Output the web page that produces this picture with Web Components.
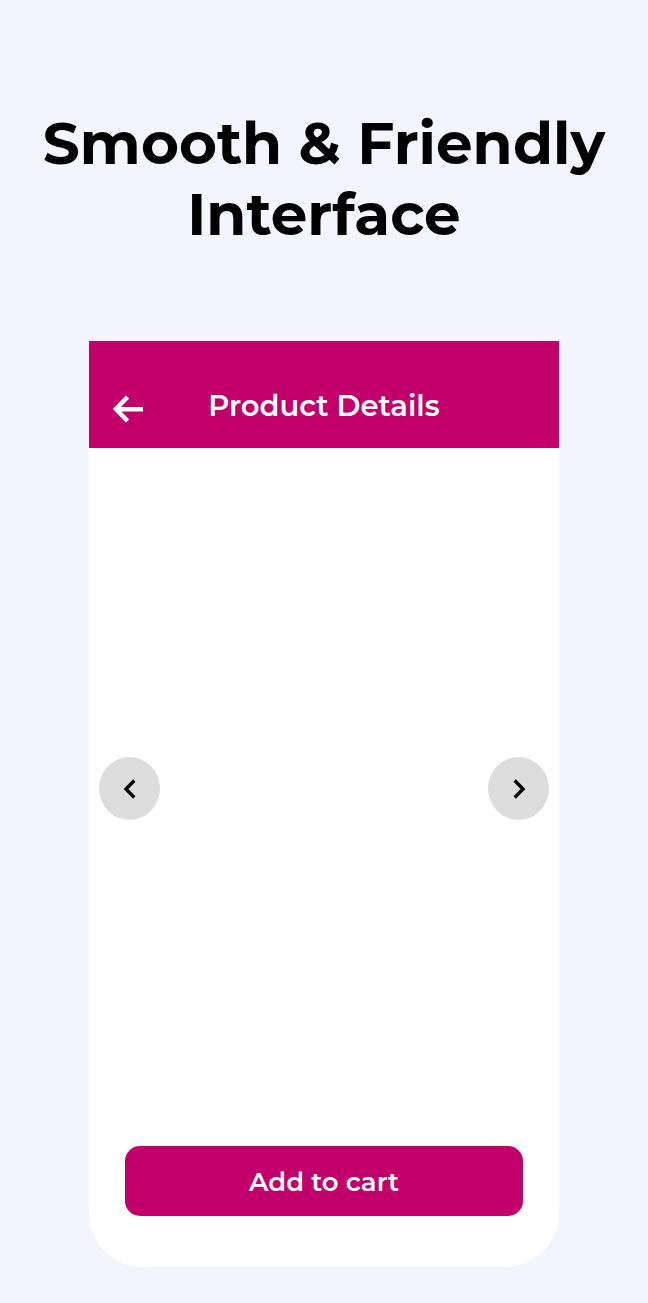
<!DOCTYPE html>
<html lang="en">
<head>
<meta charset="utf-8">
<meta name="viewport" content="width=device-width, initial-scale=1">
<title>Smooth &amp; Friendly Interface</title>
<style>
  body { margin: 0; background: #f2f5fd; font-family: Montserrat, Inter, sans-serif; --brand: #c1006b; }
</style>
</head>
<body>
<showcase-page>
  <span slot="title">Smooth &amp; Friendly<br>Interface</span>
  <product-screen>
    <app-header slot="header">Product Details</app-header>
    <image-carousel></image-carousel>
    <primary-button slot="footer">Add to cart</primary-button>
  </product-screen>
</showcase-page>

<script>
const define = (name, html) => customElements.define(name, class extends HTMLElement {
  constructor() {
    super();
    this.attachShadow({ mode: 'open' }).innerHTML = html;
  }
});

define('showcase-page', `
  <style>
    :host { display: block; padding: 108px 0 36px; }
    h1 { margin: 0 0 91px; font-size: 58px; line-height: 71px; font-weight: 700; text-align: center; color: #000; }
    main { padding: 0 89px; }
  </style>
  <h1><slot name="title"></slot></h1>
  <main><slot></slot></main>`);

define('product-screen', `
  <style>
    :host { display: flex; flex-direction: column; background: #fff; border-radius: 0 0 54px 54px; overflow: hidden; }
    footer { padding: 17px 36px 51px; }
  </style>
  <slot name="header"></slot>
  <slot></slot>
  <footer><slot name="footer"></slot></footer>`);

define('app-header', `
  <style>
    :host { display: block; background: var(--brand); color: #fff; }
    header { display: grid; grid-template-columns: 32px 1fr 32px; align-items: center; padding: 46px 23px 23px; }
    button { display: block; margin: 0; padding: 6px 0 0; border: 0; background: none; color: inherit; cursor: pointer; }
    svg { display: block; }
    h2 { margin: 0; font-size: 29px; line-height: 38px; font-weight: 600; text-align: center; }
  </style>
  <header>
    <button type="button" aria-label="Back">
      <svg width="32" height="32" viewBox="0 0 32 32" fill="none" stroke="currentColor" stroke-width="4.600" aria-hidden="true"><path d="M15.500 4 4 16l11.500 12M4 16.300h27"/></svg>
    </button>
    <h2><slot></slot></h2>
  </header>`);

define('image-carousel', `
  <style>
    :host { display: flex; align-items: center; justify-content: space-between; min-height: 681px; padding: 0 10px; }
    button { display: grid; place-items: center; width: 61px; height: 63px; padding: 0; border: 0; border-radius: 50%; background: #dddddd; color: #080808; cursor: pointer; }
  </style>
  <button type="button" aria-label="Previous image">
    <svg width="24" height="24" viewBox="0 0 24 24" fill="none" stroke="currentColor" stroke-width="3.400" aria-hidden="true"><path d="M16.300 3.500 8 12l8.300 8.500"/></svg>
  </button>
  <button type="button" aria-label="Next image">
    <svg width="24" height="24" viewBox="0 0 24 24" fill="none" stroke="currentColor" stroke-width="3.400" aria-hidden="true"><path d="m7.700 3.500 8.300 8.500-8.300 8.500"/></svg>
  </button>`);

define('primary-button', `
  <style>
    :host { display: block; }
    button { display: block; width: 100%; padding: 20px 16px 18px; border: 0; border-radius: 15px; background: var(--brand); color: #fff; font: inherit; font-size: 26px; line-height: 32px; font-weight: 600; cursor: pointer; }
  </style>
  <button type="button"><slot></slot></button>`);
</script>
</body>
</html>
